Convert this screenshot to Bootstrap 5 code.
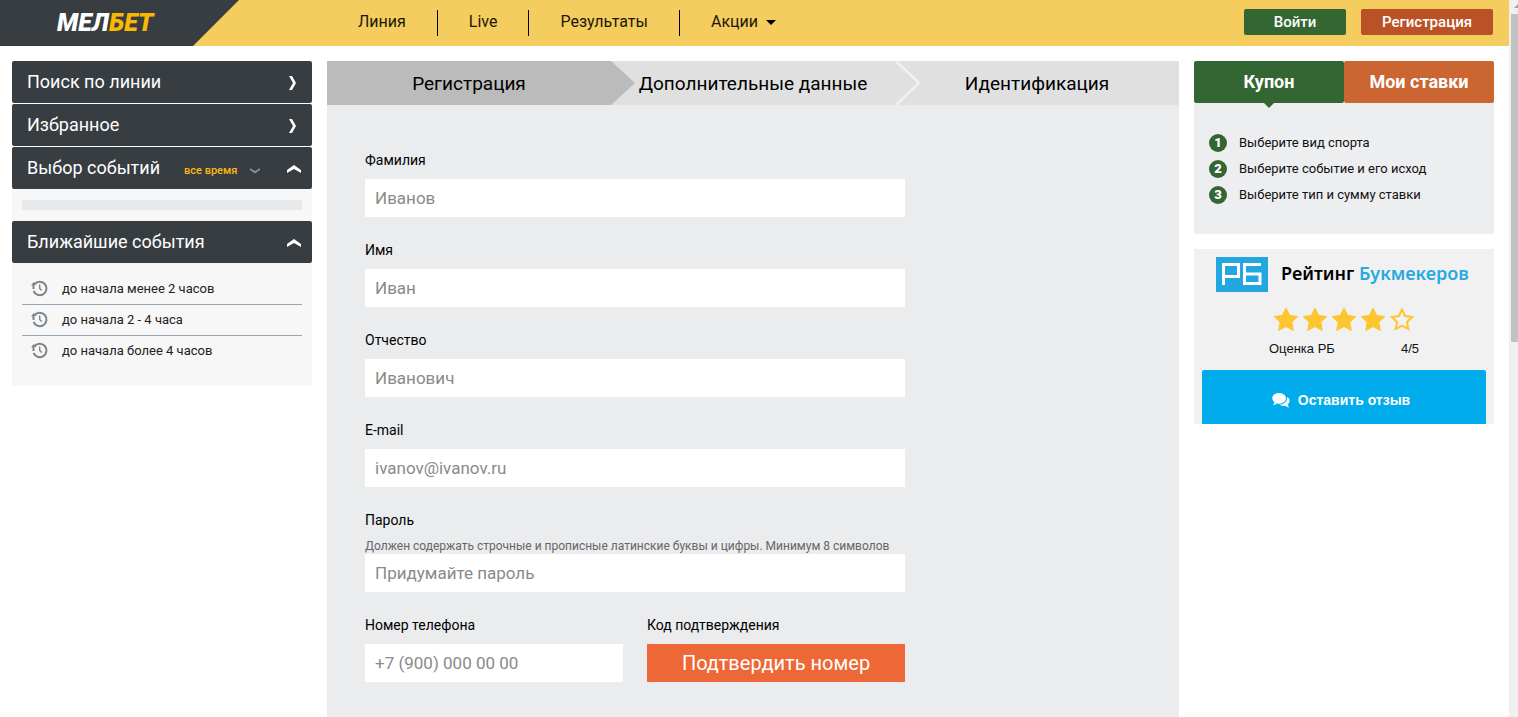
<!DOCTYPE html>
<html lang="ru">
<head>
<meta charset="utf-8">
<meta name="viewport" content="width=device-width, initial-scale=1">
<title>Мелбет — Регистрация</title>
<link href="https://cdn.jsdelivr.net/npm/bootstrap@5.3.0/dist/css/bootstrap.min.css" rel="stylesheet">
<style>
:root{--dark:#383d41;--gold:#f5cd5f;--green:#346633;--panel:#eaecee}
body{font-family:Roboto,sans-serif;font-size:14px;color:#000;background:#fff}
a{color:inherit;text-decoration:none}
.shell{height:100vh}
.viewport-pane{overflow:hidden;min-width:0}
/* header */
.topbar{height:46px;background:var(--gold);padding-right:16px}
.brand-area{width:239px;padding-left:57px;background:var(--dark);clip-path:polygon(0 0,100% 0,193px 100%,0 100%);margin-right:88px}
.brand-area a{font-weight:900;font-style:italic;font-size:25px;line-height:30px;color:#fff}
.brand-area em{color:#fab900}
.menu a{font-size:16px;padding:0 31px;color:#1c1806}
.menu li+li{border-left:1px solid #000}
.menu li{height:26px;line-height:24px}
.caret{width:0;height:0;border:5px solid transparent;border-top-color:#000;border-bottom:0;margin-left:4px;display:inline-block;vertical-align:2px}
.auth-row{gap:15px;padding-bottom:2px}
.auth{height:26px;border-radius:2px;border:0;color:#fff;font-weight:500;font-size:15px;line-height:26px;padding:0}
.auth-in{width:102px;background:var(--green)}
.auth-up{width:132px;background:#bb5127}
/* columns */
.columns{gap:15px;padding:15px 15px 0 12px}
.side{width:300px}
.acc{height:42px;border:0;border-radius:2px;background:var(--dark);color:#fff;font-size:18px;padding:0 10px 2px 15px;margin-bottom:1px}
.acc .chev{margin-left:auto;margin-top:3px}
.acc small{font-size:11px;color:#fdb813;margin:8px 13px 0 24px;font-weight:500}
.side-body{background:#f7f7f7;padding:11px 10px}
.loader{height:10px;background:#e7eaed}
.soon-body{padding:10px 10px 20px}
.soon a{height:31px;font-size:13px;gap:13px;padding-left:9px;color:#222}
.soon li+li{border-top:1px solid #99a5ae}
.soon li+li a{height:30px}
/* registration */
.reg{background:var(--panel);min-height:656px}
.steps{height:44px;background:#e0e0e0;font-size:19px;line-height:46px}
.step{position:relative;text-align:center;flex:1 1 0;white-space:nowrap}
.step.now{background:#bbb}
.step svg{position:absolute;left:100%;top:0;z-index:1}
.reg-form{max-width:616px;padding:36px 38px}
.reg-form label{display:block;font-size:14px;line-height:38px}
.field{margin-bottom:14px}
.field .form-control{height:38px;border:0;border-radius:0;padding:0 10px;font-size:17px;font-weight:400}
.field .form-control::placeholder{color:#8a8a8a}
.hint{font-size:12px;line-height:15px;color:#666}
.pair{gap:24px}
.pair .field{flex:1 1 0}
.confirm{height:38px;border:0;border-radius:0;background:#ee6736;color:#fff;font-size:20px;line-height:38px;padding:0}
/* coupon */
.tab{flex:1;height:42px;border:0;border-radius:2px;color:#fff;font-weight:700;font-size:18px;position:relative;padding:0 0 2px}
.tab-a{background:var(--green)}
.tab-b{background:#cb6633}
.tab-a::after{content:"";position:absolute;left:50%;top:100%;margin-left:-5px;border:5px solid transparent;border-top-color:var(--green);border-bottom:0}
.coupon{background:#edeef0;height:131px;padding:27px 15px;font-size:13px;border-radius:0 0 2px 2px;color:#111}
.coupon li{height:26px;gap:12px}
.num{width:18px;height:18px;border-radius:50%;background:var(--green);color:#fff;font-weight:900;font-size:13px;line-height:18px;text-align:center}
.rate{background:#f1f1f1;margin-top:15px;padding:8px 8px 0}
.rate-name{font:600 18px/33px "Noto Sans",sans-serif;gap:13px;padding-left:14px}
.rate-name b{font-weight:600;color:#29a9e1}
.stars{padding-top:15px}
.score{font:13px/18px "Liberation Sans",sans-serif;color:#111;margin:9px 67px 12px}
.review{height:54px;border:0;border-radius:2px 2px 0 0;background:#00aceb;color:#fff;font:700 14px/20px "Liberation Sans",sans-serif;padding:6px 6px 0 0;gap:8px}
/* page scroll track */
.track{width:9px;background:#f0f0f0;padding-left:2px}
.track svg{display:block}
.thumb{height:328px;background:#c1c1c1}
</style>
</head>
<body>
<svg width="0" height="0" class="position-absolute" aria-hidden="true">
<defs>
<g id="hist" fill="none" stroke="#7d8489"><path d="M3.600 4.200A6.700 6.700 0 1 1 2.600 11" stroke-width="2"/><path d="M2.500 9V5" stroke-width="2"/><path d="M0 5.500 2.700 2l3 2.500z" fill="#7d8489" stroke="none"/><path d="M8.700 4.500v4l2 2" stroke-width="1.400"/></g>
<path id="star" d="M12 0l3.600 7.400 8.200 1.200-6 5.700 1.500 8.100-7.300-3.900-7.300 3.900 1.500-8.100-6-5.700 8.200-1.200z" stroke-linejoin="round"/>
</defs>
</svg>
<div class="shell d-flex">
<div class="viewport-pane flex-fill">
<header class="topbar d-flex align-items-center">
<div class="brand-area h-100 d-flex align-items-center flex-shrink-0"><a href="#">МЕЛ<em>БЕТ</em></a></div>
<nav class="menu"><ul class="list-unstyled d-flex m-0 flex-nowrap">
<li><a href="#">Линия</a></li><li><a href="#">Live</a></li><li><a href="#">Результаты</a></li><li><a href="#">Акции <span class="caret"></span></a></li>
</ul></nav>
<div class="auth-row ms-auto d-flex">
<button class="auth auth-in" type="button">Войти</button>
<button class="auth auth-up" type="button">Регистрация</button>
</div>
</header>
<div class="columns d-flex align-items-start">
<aside class="side flex-shrink-0">
<button class="acc w-100 d-flex align-items-center" type="button">Поиск по линии<svg class="chev me-1" width="10" height="14"><path d="M1 0h3l4 7-4 7H1l4-7z" fill="#fff"/></svg></button>
<button class="acc w-100 d-flex align-items-center" type="button">Избранное<svg class="chev me-1" width="10" height="14"><path d="M1 0h3l4 7-4 7H1l4-7z" fill="#fff"/></svg></button>
<button class="acc w-100 d-flex align-items-center m-0" type="button">Выбор событий<small>все время</small><svg class="mt-2" width="10" height="6"><path d="M0 0l5 3 5-3v2L5 5.500 0 2z" fill="#8b8f92"/></svg><svg class="chev" width="16" height="8"><path d="M1 8V5l7-5 7 5v3L8 4z" fill="#fff"/></svg></button>
<div class="side-body"><div class="loader"></div></div>
<button class="acc w-100 d-flex align-items-center m-0" type="button">Ближайшие события<svg class="chev" width="16" height="8"><path d="M1 8V5l7-5 7 5v3L8 4z" fill="#fff"/></svg></button>
<div class="side-body soon-body">
<ul class="soon list-unstyled m-0">
<li><a class="d-flex align-items-center" href="#"><svg width="18" height="18"><use href="#hist"/></svg>до начала менее 2 часов</a></li>
<li><a class="d-flex align-items-center" href="#"><svg width="18" height="18"><use href="#hist"/></svg>до начала 2 - 4 часа</a></li>
<li><a class="d-flex align-items-center" href="#"><svg width="18" height="18"><use href="#hist"/></svg>до начала более 4 часов</a></li>
</ul>
</div>
</aside>
<main class="reg flex-fill">
<div class="steps d-flex">
<div class="step now">Регистрация<svg width="24" height="44"><path d="M0 0l24 22L0 44z" fill="#bbb"/></svg></div>
<div class="step">Дополнительные данные<svg width="26" height="44"><path d="M1 0l23 22L1 44" fill="none" stroke="#f1f1f1" stroke-width="2.500"/></svg></div>
<div class="step">Идентификация</div>
</div>
<form class="reg-form">
<div class="field"><label for="f1">Фамилия</label><input id="f1" class="form-control" placeholder="Иванов"></div>
<div class="field"><label for="f2">Имя</label><input id="f2" class="form-control" placeholder="Иван"></div>
<div class="field"><label for="f3">Отчество</label><input id="f3" class="form-control" placeholder="Иванович"></div>
<div class="field"><label for="f4">E-mail</label><input id="f4" type="email" class="form-control" placeholder="ivanov@ivanov.ru"></div>
<div class="field"><label for="f5">Пароль</label><div class="hint" id="h5">Должен содержать строчные и прописные латинские буквы и цифры. Минимум 8 символов</div><input id="f5" type="password" aria-describedby="h5" class="form-control" placeholder="Придумайте пароль"></div>
<div class="pair d-flex">
<div class="field"><label for="f6">Номер телефона</label><input id="f6" type="tel" class="form-control" placeholder="+7 (900) 000 00 00"></div>
<div class="field"><label for="f7">Код подтверждения</label><button id="f7" type="button" class="confirm w-100">Подтвердить номер</button></div>
</div>
</form>
</main>
<aside class="side flex-shrink-0">
<div class="d-flex"><button class="tab tab-a" type="button">Купон</button><button class="tab tab-b" type="button">Мои ставки</button></div>
<ol class="coupon list-unstyled m-0">
<li class="d-flex align-items-center"><span class="num">1</span>Выберите вид спорта</li>
<li class="d-flex align-items-center"><span class="num">2</span>Выберите событие и его исход</li>
<li class="d-flex align-items-center"><span class="num">3</span>Выберите тип и сумму ставки</li>
</ol>
<section class="rate">
<div class="rate-name d-flex text-nowrap"><svg class="flex-shrink-0" width="52" height="35"><path d="M0 0h52v35H0z" fill="#22a7e0"/><path d="M7.500 28V7.500h15v12H7.500M45 7.500H28.500v19h15.500v-9.500H28.500" fill="none" stroke="#fff" stroke-width="3"/></svg><span>Рейтинг <b>Букмекеров</b></span></div>
<div class="stars"><svg class="d-block mx-auto" width="142" height="24" viewBox="-1 -1 142 24" role="img" aria-label="4 из 5"><g fill="#fec52e" stroke="#fec52e" stroke-width="1"><use href="#star"/><use href="#star" x="29"/><use href="#star" x="58"/><use href="#star" x="87"/></g><path d="M128 1.500l3 6.500 7.200 1-5.200 5 1.300 7-6.300-3.400-6.300 3.400 1.300-7-5.200-5 7.200-1z" fill="none" stroke="#fec52e" stroke-width="2"/></svg></div>
<div class="score d-flex justify-content-between"><span>Оценка РБ</span><span>4/5</span></div>
<button class="review w-100 d-flex align-items-center justify-content-center" type="button"><svg width="18" height="17" fill="#fff"><path d="M7 1c4 0 7 2.300 7 5.300s-3 5.400-7 5.400q-1.200 0-2.200-.3Q3 13 1 13q1.200-1.300 1.300-2.800Q.3 8.500.3 6.300C.3 3.300 3 1 7 1z"/><path d="M15.200 5c1.500.8 2.400 2.200 2.400 3.800q0 2-1.700 3.500.2 2 1.200 3.200-2-.2-3.600-1.700-3.700.7-6.300-1.200c4.600 0 8.200-2.900 8-7.600z"/></svg>Оставить отзыв</button>
</section>
</aside>
</div>
</div>
<div class="track flex-shrink-0" aria-hidden="true"><svg width="7" height="14"><path d="M3 8l4-4v4z" fill="#a3a3a3"/></svg><div class="thumb"></div></div>
</div>
<script src="https://cdn.jsdelivr.net/npm/bootstrap@5.3.0/dist/js/bootstrap.bundle.min.js"></script>
</body>
</html>
